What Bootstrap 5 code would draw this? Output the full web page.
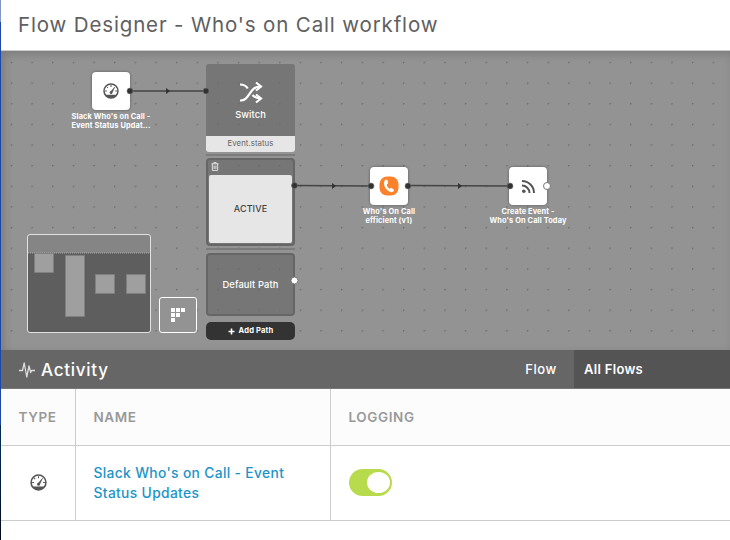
<!DOCTYPE html>
<html lang="en">
<head>
<meta charset="utf-8">
<meta name="viewport" content="width=device-width, initial-scale=1">
<title>Flow Designer - Who's on Call workflow</title>
<link href="https://cdn.jsdelivr.net/npm/bootstrap@5.3.0/dist/css/bootstrap.min.css" rel="stylesheet">
<style>
body{font-family:Inter,"Open Sans",sans-serif;color:#666;width:730px;height:540px}
.edge{width:1px;background:linear-gradient(#8295c4 0 22px,#1d48a5 22px 425px,#062a50 425px 450px,#010818 540px)}
.page-title{height:51px;border-bottom:1px solid #ccc}
.page-title h1{font-size:20.5px;letter-spacing:.85px;line-height:24px;padding:0 0 1px 17px;color:#606060}
.flow-canvas{height:299px;background-color:#939393;background-image:radial-gradient(circle at 10.5px 11.5px,#6a6a6a .5px,transparent 1.1px);background-size:20.65px 20.65px;box-shadow:inset 3px 3px 8px rgba(0,0,0,.16)}
.wires{left:0;top:0}
.node{width:38px;height:38px;border-radius:4px;background:#fff;box-shadow:0 0 3px rgba(0,0,0,.4)}
.caption{width:100px;font-size:7.4px;font-weight:700;line-height:9.4px;letter-spacing:.12px;color:#fff;text-align:center;white-space:nowrap}
.switch-col{left:205px;top:13px;width:89px}
.tile{background:rgba(105,105,105,.68);color:#fff;font-size:9.3px;font-weight:500}
.tile-head{height:72px;border-radius:3px 3px 0 0;letter-spacing:.1px}
.tile-head svg{margin:17px 0 5px}
.tile-status{height:16px;background:#e6e6e6;border-radius:0 0 3px 3px;color:#666;font-size:7.8px;letter-spacing:.05px}
.divider{height:2px;margin:2px 0;background:#7c7c7c}
.tile-active{height:88px;border:2px solid #666;border-radius:4px;padding:0 1px 1px}
.tile-active .trash{height:15px;padding:2px 0 0 2px}
.tile-body{height:68px;background:#e6e6e6;color:#444;border-radius:2px;font-size:9px;letter-spacing:.1px}
.tile-default{height:63px;border:2px solid #666;border-radius:4px;letter-spacing:.12px;margin-top:3px}
.add-path{height:18px;background:#333;color:#fff;border-radius:5px;font-size:7.6px;font-weight:700;letter-spacing:.15px;margin-top:6px}
.minimap{left:26px;top:183px;width:124px;height:99px;border:1.5px solid #e2e2e2;border-radius:3px;background:linear-gradient(#858585 0 18px,#5e5e5e 18px)}
.grid-btn{left:158px;top:246px;width:38px;height:36px;border:1px solid #fff;border-radius:3px;background:#939393}
.activity{height:39px;background:#666;border-bottom:1px solid #777}
.activity h2{font-size:17px;color:#fff;font-weight:500;letter-spacing:.75px;padding-top:2px}
.tab{color:#fff;font-size:13px;font-weight:500;text-decoration:none;padding-top:1px}
.tab-flow{width:68px;letter-spacing:.5px;padding-left:2px}
.tab-all{width:156px;padding-left:10px;background:#545454;font-weight:600;letter-spacing:.3px}
.log-table{table-layout:fixed;width:729px}
.log-table>:not(caption)>*>*{border:0 solid #ccc;border-right-width:1px;border-bottom-width:1px;padding:0 17.5px;vertical-align:middle}
.log-table>:not(caption)>*>:last-child{border-right:0}
.log-table th{height:56px;background:#fcfcfc;color:#999;font-size:13.5px;font-weight:600;letter-spacing:.6px}
.log-table td{height:75px}
.log-link{color:#1c94c8;font-size:13.8px;letter-spacing:.35px;line-height:20px;text-decoration:none;font-weight:500}
.toggle{width:43px;height:27px;border-radius:14px;background:#b8db4d;padding:3px 2px}
.knob{width:23px;height:21px;border-radius:50%;background:#fff}
</style>
</head>
<body class="d-flex bg-white overflow-hidden">
<svg width="0" height="0" class="position-absolute"><defs>
<symbol id="gauge" viewBox="0 0 16 16"><circle cx="8" cy="8" r="7" fill="none" stroke="#555" stroke-width="1.5"/><path d="M2.2 11.8h11.6A7 7 0 0 1 2.2 11.8Z" fill="#555"/><path d="M7.1 9.3 11.8 4 8.9 10.3Z" fill="#555" stroke="#555" stroke-width=".5"/><circle cx="8" cy="9.8" r="1.3" fill="#555"/><path d="M8 2v2M3.7 3.7l1.2 1.2M2 8h1.8M12.2 8H14" stroke="#555" stroke-width="1"/></symbol>
</defs></svg>
<div class="edge flex-shrink-0"></div>
<main class="flex-grow-1">
<header class="page-title d-flex align-items-center"><h1 class="m-0 text-nowrap fw-normal">Flow Designer - Who's on Call workflow</h1></header>
<section class="flow-canvas position-relative overflow-hidden">
<div class="switch-col position-absolute">
<div class="tile tile-head d-flex flex-column align-items-center"><svg width="24" height="24" viewBox="0 0 24 24" fill="none" stroke="#fff" stroke-width="2.200"><path d="M1 3.500C5 3.500 7 4.500 8.800 7.500M13.500 14C15.500 16.500 18 17.500 22 17.500M1 19.500C11 20 10 5.500 21 5.500"/><path d="M17 1.500l5 4-5 4M17 13.500l5 4-5 4"/></svg><span class="lh-1">Switch</span></div>
<div class="tile-status d-flex align-items-center justify-content-center">Event.status</div>
<div class="divider"></div>
<div class="tile tile-active"><div class="trash d-flex"><svg width="8" height="9" viewBox="0 0 8 9" fill="none" stroke="#eee" stroke-width=".9"><path d="M.5 1.800h7M2.800 1.500V.6h2.400v.9M1.300 2v6.400h5.400V2M3.100 3.500v3.500M4.900 3.500v3.500"/></svg></div><div class="tile-body d-flex align-items-center justify-content-center">ACTIVE</div></div>
<div class="divider"></div>
<div class="tile tile-default d-flex align-items-center justify-content-center">Default Path</div>
<div class="add-path d-flex align-items-center justify-content-center"><svg class="me-1" width="7" height="7" viewBox="0 0 7 7" stroke="#fff" stroke-width="1.600"><path d="M3.500.5v6M.5 3.500h6"/></svg>Add Path</div>
</div>
<div class="node position-absolute d-flex align-items-center justify-content-center" style="left:91px;top:21px"><svg width="16" height="16"><use href="#gauge"/></svg></div>
<div class="caption position-absolute" style="left:60px;top:61px">Slack Who's on Call -<br>Event Status Updat...</div>
<div class="node position-absolute d-flex align-items-center justify-content-center" style="left:369px;top:116px"><svg width="20" height="20" viewBox="0 0 20 20"><rect x=".5" y=".5" width="19" height="19" rx="7.500" fill="#fb822b"/><path d="M6.500 3.600C3.300 6.500 5.300 14.500 12.300 16.200 14 16.200 15 15 15 13.800L12.300 11.800 10.600 12.800C8.900 11.800 8 10.300 7.800 8.300L9.200 7.200 8.500 3.900Z" fill="#fff"/></svg></div>
<div class="caption position-absolute" style="left:338px;top:156px">Who's On Call<br>efficient (v1)</div>
<div class="node position-absolute d-flex align-items-center justify-content-center" style="left:508px;top:116px"><svg width="15" height="15" viewBox="0 0 15 15" fill="none" stroke="#555" stroke-width="2"><circle cx="2.800" cy="12.200" r="1.800" fill="#555" stroke="none"/><path d="M1 6.500A7.500 7.500 0 0 1 8.500 14M1 2A12 12 0 0 1 13 14"/></svg></div>
<div class="caption position-absolute" style="left:477px;top:156px">Create Event -<br>Who's On Call Today</div>
<svg class="wires position-absolute" width="729" height="299" fill="#333"><g stroke="#444" stroke-width="1.600"><path d="M129 40H205M293.500 134.500L370 135M407 134.500L509 135"/></g><path d="M165 37l4 3-4 3zM331 132l4 3-4 3zM457 132l4 3-4 3z"/><g stroke="#777" stroke-width=".6"><circle cx="129" cy="40" r="3"/><circle cx="205" cy="40" r="3"/><circle cx="293.500" cy="134.500" r="3"/><circle cx="370" cy="135" r="3"/><circle cx="407" cy="135" r="3"/><circle cx="509" cy="135" r="3"/></g><g fill="#fff" stroke="#777"><circle cx="546" cy="135" r="3.500"/><circle cx="293.500" cy="229.500" r="3.500"/></g></svg>
<div class="minimap position-absolute"><svg class="d-block" width="121" height="96" fill="#9f9f9f" stroke="#808080"><path d="M0 18H121" stroke="#aaa" stroke-dasharray="1 1"/><path d="M6.500 18.500h19v19h-19zM37.500 20.500h19v61h-19zM67.500 39.500h19v19h-19zM98.500 39.500h19v19h-19z"/></svg></div>
<div class="grid-btn position-absolute d-flex align-items-center justify-content-center"><svg width="14" height="14" fill="#fff"><path d="M0 0h4v4H0zM5 0h4v4H5zM10 0h4v4h-4zM0 5h4v4H0zM5 5h4v4H5zM0 10h4v4H0z"/></svg></div>
</section>
<section class="activity d-flex">
<h2 class="m-0 flex-grow-1 d-flex align-items-center"><svg class="ms-3 me-1" width="20" height="18" viewBox="0 0 20 18" fill="none" stroke="#ddd" stroke-width="1.300" stroke-linejoin="round"><path d="M2 9.500H5.500L7.200 2 9.800 16 12 5 13.700 11.500 14.500 9.500H18"/></svg>Activity</h2>
<a class="tab tab-flow d-flex align-items-center justify-content-center" href="#">Flow</a>
<a class="tab tab-all d-flex align-items-center" href="#">All Flows</a>
</section>
<table class="table log-table m-0">
<colgroup><col style="width:74.500px"><col style="width:255px"><col></colgroup>
<thead><tr><th>TYPE</th><th>NAME</th><th>LOGGING</th></tr></thead>
<tbody><tr><td class="text-center"><svg class="d-block mx-auto" width="17" height="17"><use href="#gauge"/></svg></td><td><a class="log-link d-block" href="#">Slack Who's on Call - Event<br>Status Updates</a></td><td><div class="toggle d-flex justify-content-end"><div class="knob"></div></div></td></tr></tbody>
</table>
</main>
<script src="https://cdn.jsdelivr.net/npm/bootstrap@5.3.0/dist/js/bootstrap.bundle.min.js"></script>
</body>
</html>
